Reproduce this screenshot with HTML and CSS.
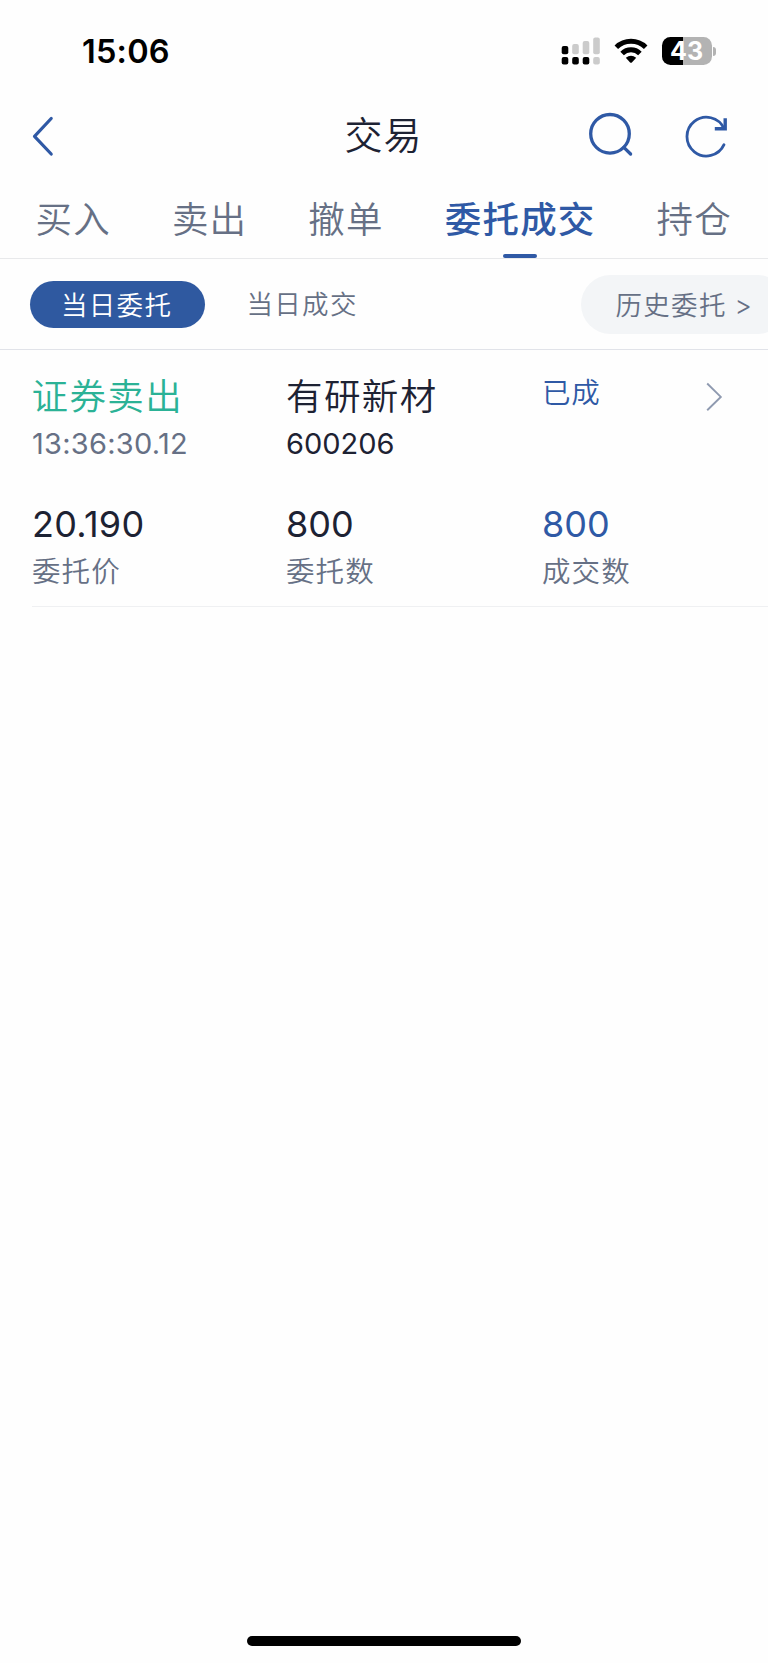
FILE: index.html
```html
<!DOCTYPE html>
<html lang="zh-CN">
<head>
<meta charset="utf-8">
<title>交易</title>
<link rel="stylesheet" href="styles.css">
</head>
<body>
<div class="screen">
  <header class="status">
    <span class="clock">15:06</span>
    <div class="status-icons">
      <svg class="signal" width="40" height="28" viewBox="0 0 40 28">
        <g fill="#000"><rect x="0.7" y="9" width="6.6" height="8.2" rx="2"/><rect x="0.7" y="20" width="6.6" height="7.6" rx="2"/><rect x="11.2" y="20" width="6.6" height="7.6" rx="2"/><rect x="21.7" y="20" width="6.6" height="7.6" rx="2"/></g>
        <g fill="#cbcbcb"><rect x="11.2" y="7" width="6.6" height="10.2" rx="2"/><rect x="21.7" y="4" width="6.6" height="13.2" rx="2"/><rect x="32.2" y="0.5" width="6.6" height="16.7" rx="2"/><rect x="32.2" y="20" width="6.6" height="7.6" rx="2"/></g>
      </svg>
      <svg class="wifi" width="34" height="26" viewBox="0 0 34 26">
        <g fill="none" stroke="#000" stroke-width="5"><path d="M2.3 9.3A21 21 0 0 1 31.7 9.3"/><path d="M8.1 15.5A12.6 12.6 0 0 1 25.9 15.5"/></g>
        <path d="M11.8 19.8Q17 15.6 22.2 19.8L17.9 24.4Q17 25.3 16.1 24.4Z"/>
      </svg>
      <div class="battery"><span class="battery-body">43</span><span class="battery-nub"></span></div>
    </div>
  </header>

  <nav class="titlebar">
    <svg class="back" width="26" height="44" viewBox="0 0 26 44"><path d="M21.2 4.5L4.5 22.3L21.2 40" fill="none" stroke="#2f59a5" stroke-width="3.2" stroke-linecap="round" stroke-linejoin="round"/></svg>
    <h1 class="title">交易</h1>
    <div class="actions">
      <svg width="48" height="48" viewBox="586 112 48 48"><g fill="none" stroke="#2f59a5" stroke-width="3.3"><circle cx="610" cy="133.8" r="19.3"/><path d="M623.8 147.4L630.6 154" stroke-linecap="round"/></g></svg>
      <svg width="48" height="48" viewBox="682 112 48 48"><g fill="none" stroke="#2f59a5"><path d="M724 144.7A19.4 19.4 0 1 1 724 128.5" stroke-width="2.8" stroke-linecap="round"/><path d="M725.2 118.3V128.8H714.8" stroke-width="3.4"/></g></svg>
    </div>
  </nav>

  <nav class="tabs">
    <span class="tab">买入</span><span class="tab">卖出</span><span class="tab">撤单</span><span class="tab active">委托成交</span><span class="tab">持仓</span>
  </nav>

  <div class="filters">
    <span class="pill">当日委托</span>
    <span class="filter">当日成交</span>
    <span class="history">历史委托 <span class="gt">&gt;</span></span>
  </div>

  <main class="order">
    <div class="cell">
      <div class="name sell">证券卖出</div>
      <div class="sub muted">13:36:30.12</div>
    </div>
    <div class="cell">
      <div class="name">有研新材</div>
      <div class="sub">600206</div>
    </div>
    <div class="cell state-cell">
      <div class="state">已成</div>
      <svg class="chevron" width="20" height="32" viewBox="0 0 20 32"><path d="M3.2 2.5L16.8 15.9L3.2 29.2" fill="none" stroke="#8f9ab0" stroke-width="1.9"/></svg>
    </div>
    <div class="cell"><div class="value price">20.190</div><div class="label">委托价</div></div>
    <div class="cell"><div class="value">800</div><div class="label">委托数</div></div>
    <div class="cell"><div class="value blue">800</div><div class="label">成交数</div></div>
  </main>

  <div class="home-bar"></div>
</div>
</body>
</html>
```
FILE: styles.css
```css
* { box-sizing: border-box; }
body { margin: 0; background: #fefefe; font-family: Inter, "Noto Sans CJK SC", sans-serif; color: #1d2233; }
.screen { display: flex; flex-direction: column; width: 768px; height: 1663px; overflow: hidden; white-space: nowrap; }

.status { display: flex; justify-content: space-between; height: 100px; padding: 37px 52px 0 82px; }
.clock { font-size: 32.5px; line-height: 30px; font-weight: 600; letter-spacing: 0.2px; color: #000; }
.status-icons { display: flex; align-items: flex-start; }
.wifi { margin: 1px 14px 0 13px; }
.battery { display: flex; align-items: center; gap: 1.5px; }
.battery-body { width: 50px; height: 28px; border-radius: 8.5px; background: linear-gradient(90deg, #000 21px, #b3b3b3 21px); color: #fff; font-size: 25px; line-height: 28px; font-weight: 700; text-align: center; }
.battery-nub { width: 3px; height: 9px; border-radius: 0 4px 4px 0; background: #b3b3b3; }

.titlebar { display: grid; grid-template-columns: 200px 1fr 200px; height: 84px; padding: 0 38px 0 30px; }
.back { margin-top: 14px; }
.title { margin: 13px 0 0 7px; font-size: 38px; line-height: 44px; font-weight: 350; letter-spacing: 1px; text-align: center; }
.actions { display: flex; justify-content: flex-end; gap: 48px; padding-top: 12px; }

.tabs { display: flex; justify-content: space-between; height: 75px; padding: 10px 36px 0 35.5px; border-bottom: 1px solid #e8e9eb; }
.tab { position: relative; font-size: 36.5px; line-height: 52px; letter-spacing: 1.2px; color: #667085; font-weight: 350; }
.tab.active { color: #2f59a5; font-weight: 500; }
.tab.active::after { content: ""; position: absolute; left: 50%; bottom: 0; width: 34px; height: 4px; margin-left: -17px; border-radius: 2px; background: #2f59a5; }

.filters { display: flex; align-items: center; height: 91px; border-bottom: 1px solid #e1e3e9; font-size: 26.5px; letter-spacing: 1.3px; color: #667085; font-weight: 350; }
.pill { width: 175px; height: 47px; margin-left: 30px; border-radius: 24px; background: #2f59a0; color: #fff; line-height: 48px; padding-left: 31px; }
.filter { margin-left: 41.5px; line-height: 48px; }
.history { width: 206px; height: 59px; margin-left: auto; margin-right: -19px; border-radius: 30px; background: #f3f5f7; line-height: 61px; padding-left: 34.5px; }
.gt { margin-left: -1px; }

.order { display: grid; grid-template-columns: 254px 256px 1fr; grid-template-rows: 134px 122px; height: 257px; margin-left: 32px; border-bottom: 1px solid #eff0f2; }
.name { margin-top: 21px; font-size: 36.5px; line-height: 52px; letter-spacing: 1.4px; font-weight: 350; }
.sell { color: #2bb296; margin-left: -0.5px; }
.sub { margin-top: 4px; font-size: 29px; line-height: 34px; }
.muted { letter-spacing: 0.25px; }
.muted, .label { color: #667085; }
.state-cell { display: flex; justify-content: space-between; padding-right: 44px; }
.state { margin-top: 24px; font-size: 28.5px; line-height: 38px; letter-spacing: 0.8px; color: #2f59a5; font-weight: 350; }
.chevron { margin-top: 31px; }
.value { margin-top: 19px; font-size: 36px; line-height: 42px; }
.price { letter-spacing: 0.3px; }
.blue { color: #2f59a5; }
.label { margin-top: 7px; font-size: 28.5px; line-height: 40px; letter-spacing: 1.1px; font-weight: 350; }

.home-bar { width: 274px; height: 10px; margin: auto auto 17px; border-radius: 5px; background: #000; }
```
